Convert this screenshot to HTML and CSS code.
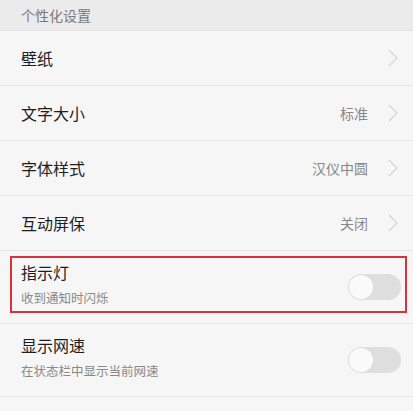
FILE: index.html
```html
<!DOCTYPE html>
<html lang="zh-CN">
<head>
    <meta charset="UTF-8">
    <meta name="viewport" content="width=device-width, initial-scale=1.0">
    <title>个性化设置</title>
    <link rel="stylesheet" href="styles.css">
</head>
<body>

    <div class="group-title">个性化设置</div>

    <div class="list">
        <div class="row">
            <span class="label">壁纸</span>
            <svg class="arrow" width="10" height="18" viewBox="0 0 10 18"><polyline points="1,1 9,9 1,17"/></svg>
        </div>
        <div class="row">
            <span class="label">文字大小</span>
            <span class="value">标准</span>
            <svg class="arrow" width="10" height="18" viewBox="0 0 10 18"><polyline points="1,1 9,9 1,17"/></svg>
        </div>
        <div class="row">
            <span class="label">字体样式</span>
            <span class="value">汉仪中圆</span>
            <svg class="arrow" width="10" height="18" viewBox="0 0 10 18"><polyline points="1,1 9,9 1,17"/></svg>
        </div>
        <div class="row">
            <span class="label">互动屏保</span>
            <span class="value">关闭</span>
            <svg class="arrow" width="10" height="18" viewBox="0 0 10 18"><polyline points="1,1 9,9 1,17"/></svg>
        </div>
        <div class="row tall marked">
            <div class="texts">
                <div class="label">指示灯</div>
                <div class="desc">收到通知时闪烁</div>
            </div>
            <div class="switch"><div class="knob"></div></div>
        </div>
        <div class="row tall">
            <div class="texts">
                <div class="label">显示网速</div>
                <div class="desc">在状态栏中显示当前网速</div>
            </div>
            <div class="switch"><div class="knob"></div></div>
        </div>
    </div>

</body>
</html>
```

FILE: styles.css
```css
body {
    margin: 0;
    height: 411px;
    overflow: hidden;
    font-family: "Noto Sans CJK SC", "Noto Sans", sans-serif;
    background-color: #f6f6f6;
    color: #1e1e1e;
}
.group-title {
    height: 31px;
    line-height: 31px;
    padding-left: 21px;
    font-size: 14px;
    color: #7a7a7a;
    background-color: #ebebeb;
    border-bottom: 1px solid #e2e2e2;
    box-sizing: border-box;
}
.list {
    background-color: #f6f6f6;
}
.row {
    display: flex;
    align-items: center;
    height: 55px;
    padding: 0 15px 0 21px;
    border-bottom: 1px solid #e8e8e8;
    box-sizing: border-box;
}
.row.tall {
    height: 73px;
    padding-right: 12px;
}
.label {
    font-size: 16px;
    line-height: 22px;
    margin-right: auto;
}
.value {
    font-size: 14px;
    color: #888;
    margin-right: 20px;
}
.arrow polyline {
    fill: none;
    stroke: #d4d4d4;
    stroke-width: 1.1;
}
.texts {
    margin-right: auto;
    margin-top: -6px;
}
.desc {
    font-size: 12.5px;
    line-height: 18px;
    color: #888;
    margin-top: 6px;
}
.switch {
    width: 53px;
    height: 26px;
    border-radius: 13px;
    background-color: #dedede;
    padding: 1px;
    box-sizing: border-box;
}
.knob {
    width: 24px;
    height: 24px;
    border-radius: 50%;
    background-color: #fafafa;
}
.marked {
    position: relative;
}
.marked::after {
    content: "";
    position: absolute;
    left: 10px;
    right: 6px;
    top: 5px;
    bottom: 10px;
    border: 2px solid #d8323c;
}
```
